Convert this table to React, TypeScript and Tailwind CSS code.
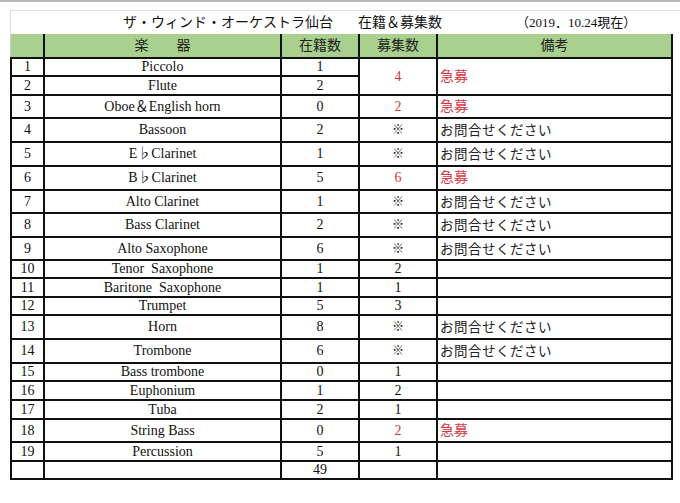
const rows: Array<{ no: string; name: string; count: string; recruit?: string; red?: boolean; note?: string }> = [
  { no: '1', name: 'Piccolo', count: '1' },
  { no: '2', name: 'Flute', count: '2' },
  { no: '3', name: 'Oboe＆English horn', count: '0', recruit: '2', red: true, note: '急募' },
  { no: '4', name: 'Bassoon', count: '2', recruit: '※', note: 'お問合せください' },
  { no: '5', name: 'E♭Clarinet', count: '1', recruit: '※', note: 'お問合せください' },
  { no: '6', name: 'B♭Clarinet', count: '5', recruit: '6', red: true, note: '急募' },
  { no: '7', name: 'Alto Clarinet', count: '1', recruit: '※', note: 'お問合せください' },
  { no: '8', name: 'Bass Clarinet', count: '2', recruit: '※', note: 'お問合せください' },
  { no: '9', name: 'Alto Saxophone', count: '6', recruit: '※', note: 'お問合せください' },
  { no: '10', name: 'Tenor  Saxophone', count: '1', recruit: '2' },
  { no: '11', name: 'Baritone  Saxophone', count: '1', recruit: '1' },
  { no: '12', name: 'Trumpet', count: '5', recruit: '3' },
  { no: '13', name: 'Horn', count: '8', recruit: '※', note: 'お問合せください' },
  { no: '14', name: 'Trombone', count: '6', recruit: '※', note: 'お問合せください' },
  { no: '15', name: 'Bass trombone', count: '0', recruit: '1' },
  { no: '16', name: 'Euphonium', count: '1', recruit: '2' },
  { no: '17', name: 'Tuba', count: '2', recruit: '1' },
  { no: '18', name: 'String Bass', count: '0', recruit: '2', red: true, note: '急募' },
  { no: '19', name: 'Percussion', count: '5', recruit: '1' },
];

const cell = 'flex items-center justify-center bg-white leading-none';
const head = 'flex items-center justify-center bg-[#a9d08e] leading-none text-[#222]';
const gothic = 'font-["Noto_Sans_CJK_JP",sans-serif]';
const red = 'text-[#d7343f]';

export default function App() {
  return (
    <div className='h-[503px] w-[680px] overflow-hidden bg-white font-["Liberation_Serif","Noto_Sans_CJK_JP",serif] text-[14px] text-[#111]'>
      <div className="h-[2px] bg-[#b9b9b9]" />
      <div className="pl-[10px] pt-[8px]">
        <div className="flex h-[24px] items-center border-l border-t border-[#dedede] text-[14px] leading-none">
          <span className="ml-[112px] whitespace-pre">ザ・ウィンド・オーケストラ仙台</span>
          <span className="ml-[25px] whitespace-pre">在籍＆募集数</span>
          <span className="ml-[74px] whitespace-pre text-[13px]">（2019．10.24現在）</span>
        </div>

        <div className="grid w-[663px] grid-cols-[31px_235px_76px_76px_233px] grid-rows-[23px_16px_17px_21px_22px_22px_22px_21px_22px_21px_16px_17px_16px_22px_22px_16px_17px_17px_21px_17px_16px] gap-[2px] bg-[#111] px-[2px] pb-[2px]">
          <div className={`${head} -ml-[2px] border-l border-[#d0d0d0]`} />
          <div className={`${head} whitespace-pre`}>楽　　器</div>
          <div className={head}>在籍数</div>
          <div className={head}>募集数</div>
          <div className={head}>備考</div>

          {rows.map((r, i) => (
            <div key={r.no} className="contents">
              <div className={cell}>{r.no}</div>
              <div className={`${cell} whitespace-pre`}>{r.name}</div>
              <div className={cell}>{r.count}</div>
              {i === 0 && (
                <>
                  <div className={`${cell} row-span-2 ${red}`}>4</div>
                  <div className={`${cell} row-span-2 justify-start pl-[2px] ${red}`}>急募</div>
                </>
              )}
              {i > 1 && (
                <>
                  <div className={`${cell} ${r.red ? red : ''} ${r.recruit === '※' ? 'text-[12px] font-bold' : ''}`}>
                    {r.recruit}
                  </div>
                  <div
                    className={`${cell} justify-start pl-[2px] ${r.red ? red : `${gothic} tracking-[0.5px] text-[13.5px] text-[#222]`}`}
                  >
                    {r.note}
                  </div>
                </>
              )}
            </div>
          ))}

          <div className={cell} />
          <div className={cell} />
          <div className={cell}>49</div>
          <div className={cell} />
          <div className={cell} />
        </div>
      </div>
    </div>
  );
}
